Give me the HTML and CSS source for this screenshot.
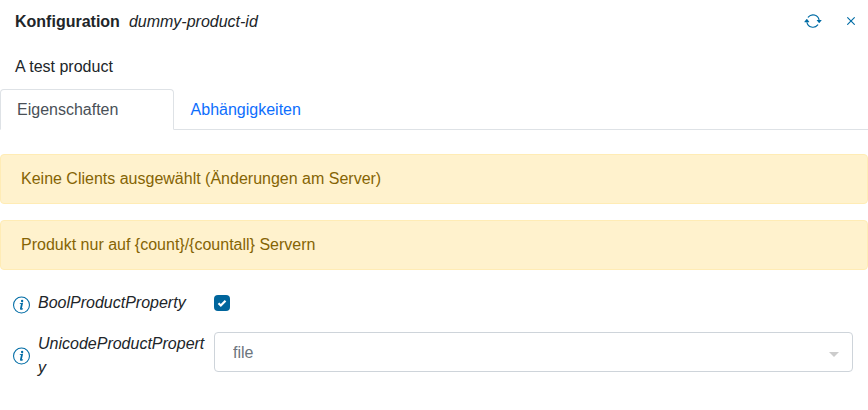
FILE: index.html
```html
<!DOCTYPE html>
<html lang="de">
<head>
<meta charset="utf-8">
<title>Konfiguration</title>
<link rel="stylesheet" href="styles.css">
</head>
<body>
<svg class="sprite" aria-hidden="true">
  <symbol id="info" viewBox="0 0 16 16">
    <path d="M8 15A7 7 0 1 1 8 1a7 7 0 0 1 0 14m0 1A8 8 0 1 0 8 0a8 8 0 0 0 0 16"/>
    <path d="M6.400 6.300L9.500 5.900 8.300 11.400 9.500 11.100 9.300 12Q8.300 12.600 7.300 12.500 6.400 12.300 6.600 11.200L7.500 7.100 6.300 7zM9.700 4.200a1.100 1.100 0 1 1-2.200 0 1.100 1.100 0 0 1 2.200 0"/>
  </symbol>
</svg>
<header class="header">
  <h1 class="title">Konfiguration</h1>
  <i class="product-id">dummy-product-id</i>
  <div class="actions">
    <button class="icon-button" type="button" aria-label="Neu laden">
      <svg class="icon" viewBox="0 0 16 16"><path d="M11.534 7h3.932a.25.25 0 0 1 .192.41l-1.966 2.36a.25.25 0 0 1-.384 0l-1.966-2.36a.25.25 0 0 1 .192-.41m-11 2h3.932a.25.25 0 0 0 .192-.41L2.692 6.23a.25.25 0 0 0-.384 0L.342 8.59A.25.25 0 0 0 .534 9"/><path d="M8 3c-1.552 0-2.94.707-3.857 1.818a.5.5 0 1 1-.771-.636A6.002 6.002 0 0 1 13.917 7H12.9A5 5 0 0 0 8 3M3.1 9a5.002 5.002 0 0 0 8.757 2.182.5.5 0 1 1 .771.636A6.002 6.002 0 0 1 2.083 9z"/></svg>
    </button>
    <button class="icon-button" type="button" aria-label="Schließen">
      <svg class="icon" viewBox="0 0 16 16"><path d="M4.646 4.646a.5.5 0 0 1 .708 0L8 7.293l2.646-2.647a.5.5 0 0 1 .708.708L8.707 8l2.647 2.646a.5.5 0 0 1-.708.708L8 8.707l-2.646 2.647a.5.5 0 0 1-.708-.708L7.293 8 4.646 5.354a.5.5 0 0 1 0-.708"/></svg>
    </button>
  </div>
</header>
<main>
  <p class="description">A test product</p>
  <nav class="tabs">
    <a class="tab active" href="#properties">Eigenschaften</a>
    <a class="tab" href="#dependencies">Abhängigkeiten</a>
  </nav>
  <div class="alert" role="alert">Keine Clients ausgewählt (Änderungen am Server)</div>
  <div class="alert" role="alert">Produkt nur auf {count}/{countall} Servern</div>
  <form class="properties" id="properties">
    <div class="property">
      <svg class="icon"><use href="#info"/></svg>
      <label class="name" for="bool">BoolProductProperty</label>
      <input class="check" id="bool" type="checkbox" checked>
    </div>
    <div class="property">
      <svg class="icon"><use href="#info"/></svg>
      <label class="name" for="unicode">UnicodeProductProperty</label>
      <div class="select-wrap">
        <select class="select" id="unicode"><option>file</option></select>
      </div>
    </div>
  </form>
</main>
</body>
</html>
```
FILE: styles.css
```css
* { box-sizing: border-box; }

body {
  margin: 0;
  background: #fff;
  color: #212529;
  font: 16px/24px "Liberation Sans", Arial, sans-serif;
}

.sprite { display: none; }

.icon {
  display: block;
  flex: none;
  width: 18px;
  height: 18px;
  fill: #006ca5;
}

.header {
  display: flex;
  align-items: center;
  gap: 9px;
  padding: 10px 8px 8px 15px;
}

.title {
  margin: 0;
  font-size: 16px;
  font-weight: bold;
}

.actions {
  display: flex;
  gap: 20px;
  margin-left: auto;
  padding-bottom: 2px;
}

.icon-button {
  padding: 0;
  border: 0;
  background: none;
  cursor: pointer;
}

.description {
  margin: 0;
  padding: 13px 15px 10px;
}

.tabs {
  display: flex;
  margin-bottom: 24px;
  border-bottom: 1px solid #dee2e6;
}

.tab {
  margin-bottom: -1px;
  padding: 8px 16px 7px;
  border: 1px solid transparent;
  border-radius: 4px 4px 0 0;
  color: #0d6efd;
  text-decoration: none;
}

.tab.active {
  flex: 0 0 20%;
  border-color: #dee2e6 #dee2e6 #fff;
  background: #fff;
  color: #495057;
}

.alert {
  margin-bottom: 16px;
  padding: 12px 20px;
  border: 1px solid #ffecb5;
  border-radius: 4px;
  background: #fff2cd;
  color: #856404;
}

.properties {
  display: grid;
  gap: 13px;
  padding: 5px 15px 0 13px;
}

.property {
  display: grid;
  grid-template-columns: 17px 168px 1fr;
  column-gap: 8px;
  align-items: start;
  min-height: 28px;
}

.property .icon {
  align-self: center;
  width: 17px;
}

.name {
  font-style: italic;
  overflow-wrap: anywhere;
}

.check {
  appearance: none;
  width: 16px;
  height: 16px;
  margin: 4px 0 0;
  border-radius: 4px;
  background: #00659c url("data:image/svg+xml,%3Csvg xmlns='http://www.w3.org/2000/svg' viewBox='0 0 16 16'%3E%3Cpath d='M4.500 8.300l2.300 2.200 4.700-4.700' fill='none' stroke='white' stroke-width='2.200'/%3E%3C/svg%3E");
}

.select-wrap { position: relative; }

.select-wrap::after {
  content: "";
  position: absolute;
  top: 20px;
  right: 14px;
  border: 5px solid transparent;
  border-top-color: #ccc;
  border-bottom: 0;
  pointer-events: none;
}

.select {
  appearance: none;
  display: block;
  width: 100%;
  height: 40px;
  padding: 2px 18px 0;
  border: 1px solid #ced4da;
  border-radius: 4px;
  background: #fff;
  color: #6c757d;
  font: inherit;
}
```
